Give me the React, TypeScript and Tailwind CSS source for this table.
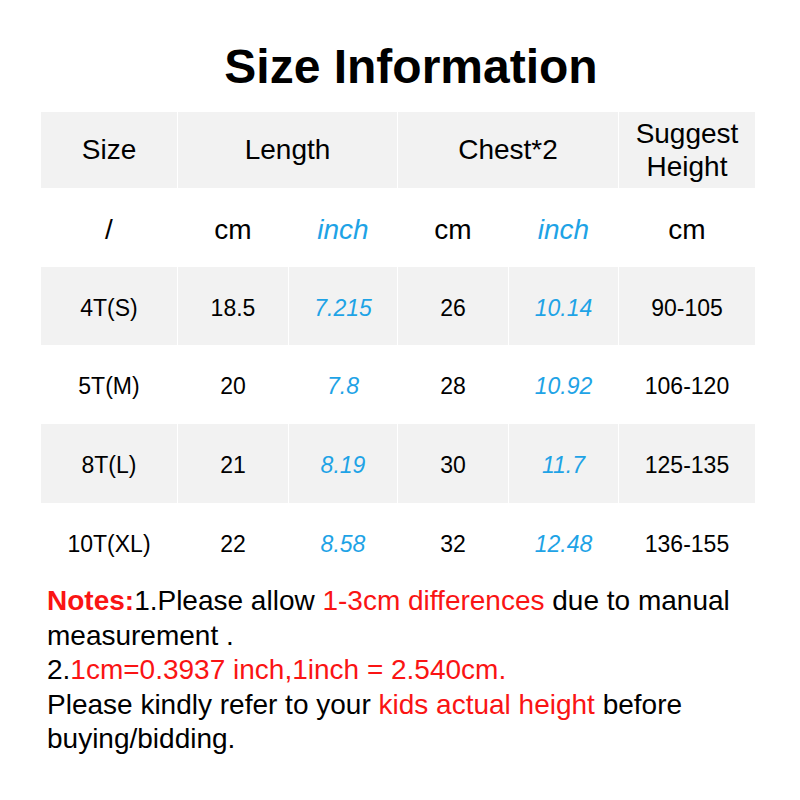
import React from 'react';

type Row = {
  size: string;
  lenCm: string;
  lenIn: string;
  chestCm: string;
  chestIn: string;
  height: string;
};

const rows: Row[] = [
  {size: '4T(S)', lenCm: '18.5', lenIn: '7.215', chestCm: '26', chestIn: '10.14', height: '90-105'},
  {size: '5T(M)', lenCm: '20', lenIn: '7.8', chestCm: '28', chestIn: '10.92', height: '106-120'},
  {size: '8T(L)', lenCm: '21', lenIn: '8.19', chestCm: '30', chestIn: '11.7', height: '125-135'},
  {size: '10T(XL)', lenCm: '22', lenIn: '8.58', chestCm: '32', chestIn: '12.48', height: '136-155'},
];

const cols = 'grid grid-cols-[136px_110px_108px_110px_109px_136px] gap-x-px';

const Cell = ({
  children,
  gray,
  blue,
  span,
  low,
}: {
  children: React.ReactNode;
  gray?: boolean;
  blue?: boolean;
  span?: boolean;
  low?: boolean;
}) => (
  <div
    className={`flex items-center justify-center text-center ${gray ? 'bg-[#f2f2f2]' : 'bg-white'} ${blue ? 'italic text-[#1ea3e6]' : 'text-black'} ${span ? 'col-span-2' : ''} ${low ? 'pt-[4px]' : ''}`}>
    {children}
  </div>
);

export default function App() {
  return (
    <div className="w-[800px] h-[800px] bg-white font-['Liberation_Sans',Arial,sans-serif]">
      <h1 className="pt-[43px] pl-[22px] text-center text-[48px] font-bold leading-[47px] text-black">
        Size Information
      </h1>

      <div className="mt-[22px] ml-[41px] w-[714px]">
        <div className={`${cols} h-[76px] text-[28px]`}>
          <Cell gray>Size</Cell>
          <Cell gray span>
            Length
          </Cell>
          <Cell gray span>
            Chest*2
          </Cell>
          <Cell gray>
            <span className="leading-[33px]">
              Suggest
              <br />
              Height
            </span>
          </Cell>
        </div>

        <div className={`${cols} h-[79px] text-[28px]`}>
          <Cell low>/</Cell>
          <Cell low>cm</Cell>
          <Cell low blue>
            inch
          </Cell>
          <Cell low>cm</Cell>
          <Cell low blue>
            inch
          </Cell>
          <Cell low>cm</Cell>
        </div>

        {rows.map((r, i) => (
          <div
            key={r.size}
            className={`${cols} ${i === 0 ? 'h-[78px]' : 'h-[79px]'} text-[23px]`}>
            <Cell low gray={i % 2 === 0}>
              {r.size}
            </Cell>
            <Cell low gray={i % 2 === 0}>
              {r.lenCm}
            </Cell>
            <Cell low gray={i % 2 === 0} blue>
              {r.lenIn}
            </Cell>
            <Cell low gray={i % 2 === 0}>
              {r.chestCm}
            </Cell>
            <Cell low gray={i % 2 === 0} blue>
              {r.chestIn}
            </Cell>
            <Cell low gray={i % 2 === 0}>
              {r.height}
            </Cell>
          </div>
        ))}
      </div>

      <div className="mt-[2px] pl-[47px] pr-[30px] text-[28px] leading-[34.5px] text-black">
        <p>
          <span className="font-bold text-[#fa1414]">Notes:</span>1.Please allow{' '}
          <span className="text-[#fa1414]">1-3cm differences</span> due to manual
          measurement .
        </p>
        <p>
          2.<span className="text-[#fa1414]">1cm=0.3937 inch,1inch = 2.540cm.</span>
        </p>
        <p>
          Please kindly refer to your{' '}
          <span className="text-[#fa1414]">kids actual height</span> before
          buying/bidding.
        </p>
      </div>
    </div>
  );
}
